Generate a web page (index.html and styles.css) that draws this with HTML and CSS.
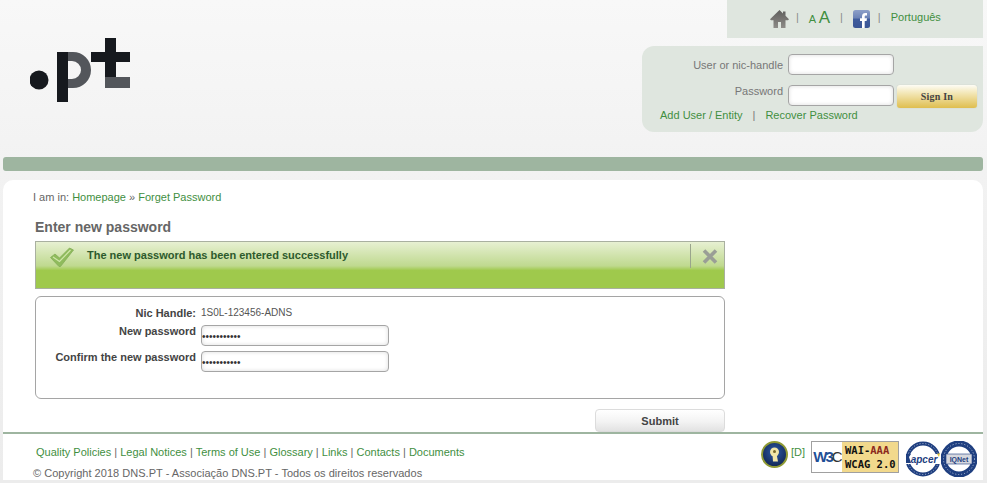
FILE: index.html
```html
<!DOCTYPE html>
<html lang="en">
<head>
<meta charset="utf-8">
<title>DNS.PT</title>
<link rel="stylesheet" href="styles.css">
</head>
<body>
<div class="page">
  <header class="header">
    <div class="logo">
      <svg width="101" height="65" viewBox="0 0 101 65" aria-label=".pt">
        <circle cx="9" cy="42" r="9.500" fill="#16191e"/>
        <path d="M38 14h5a18 18 0 0 1 0 36h-5v-9h4a9 9 0 0 0 0-18h-4z" fill="#53565b"/>
        <rect x="27" y="14" width="11" height="50" fill="#16191e"/>
        <rect x="75" y="0" width="11" height="39" fill="#16191e"/>
        <rect x="61" y="14" width="39" height="10" fill="#16191e"/>
        <rect x="75" y="39" width="25" height="11" fill="#53565b"/>
      </svg>
    </div>
    <div class="tools">
      <nav class="topbar">
        <svg class="home" width="19" height="18" viewBox="0 0 19 18"><defs><linearGradient id="homeFill" x1="0" y1="0" x2="0" y2="1"><stop offset="0" stop-color="#5f5e5c"/><stop offset="1" stop-color="#8e8c88"/></linearGradient></defs><path d="M9.500 0 0 9.200 1 10.200H3.500V18H8v-6h3v6h4.500V10.200H18L19 9.200 15.500 5.800V1.500H13V3.400z" fill="url(#homeFill)"/></svg>
        <span class="sep">|</span>
        <span class="font-size"><span class="small-a">A</span> <span class="big-a">A</span></span>
        <span class="sep">|</span>
        <svg class="fb" width="17" height="18" viewBox="0 0 17 18"><defs><linearGradient id="fbFill" x1="0" y1="0" x2="0" y2="1"><stop offset="0" stop-color="#8ea0c8"/><stop offset=".45" stop-color="#6b83b6"/><stop offset=".5" stop-color="#3f5c9c"/><stop offset="1" stop-color="#3a5595"/></linearGradient></defs><rect width="17" height="18" rx="2.500" fill="url(#fbFill)"/><path d="M9 18v-7H7V8.300h2V6.400C9 4.200 10.300 3 12.300 3H14v2.600h-1.100c-.9 0-1.200.5-1.200 1.100v1.600H14L13.600 11h-1.900v7z" fill="#fff"/></svg>
        <span class="sep">|</span>
        <a class="link lang" href="#">Português</a>
      </nav>
      <form class="login">
        <div class="login-row row-user">
          <label class="login-label">User or nic-handle</label>
          <input class="login-input" type="text">
        </div>
        <div class="login-row row-pass">
          <label class="login-label">Password</label>
          <input class="login-input" type="password">
          <button class="signin" type="button">Sign In</button>
        </div>
        <div class="login-links">
          <a class="link" href="#">Add User / Entity</a>
          <span class="login-sep">|</span>
          <a class="link" href="#">Recover Password</a>
        </div>
      </form>
    </div>
  </header>
  <div class="bar"></div>
  <main class="panel">
    <p class="crumbs">I am in: <a class="link" href="#">Homepage</a> » <a class="link" href="#">Forget Password</a></p>
    <section class="content">
      <h1 class="title">Enter new password</h1>
      <div class="notice">
        <svg class="check" width="24" height="20" viewBox="0 0 24 20"><path d="M0.500 10.500 5 7 9.500 11 19.500 1 23.500 3 10.500 19.500H9z" fill="#8fbb5c" stroke="#84ad58" stroke-width=".8"/><path d="M3 10 9.500 14.500 20.500 3" fill="none" stroke="#d0e6aa" stroke-width="1.200"/></svg>
        <span class="notice-text">The new password has been entered successfully</span>
        <span class="notice-close">
          <svg width="16" height="15" viewBox="0 0 16 15"><path d="M2 1.500 14 13.500M14 1.500 2 13.500" stroke="#9a9e96" stroke-width="3.600"/></svg>
        </span>
      </div>
      <form class="form-box">
        <div class="form-row row-nic">
          <span class="form-label">Nic Handle:</span>
          <span class="form-value">1S0L-123456-ADNS</span>
        </div>
        <div class="form-row">
          <label class="form-label">New password</label>
          <input class="form-input" type="password" value="12345678901">
        </div>
        <div class="form-row">
          <label class="form-label">Confirm the new password</label>
          <input class="form-input" type="password" value="12345678901">
        </div>
      </form>
      <div class="actions"><button class="submit" type="button">Submit</button></div>
    </section>
    <footer class="footer">
      <div class="footer-text">
        <p class="footer-links">
          <a class="link" href="#">Quality Policies</a> | <a class="link" href="#">Legal Notices</a> | <a class="link" href="#">Terms of Use</a> | <a class="link" href="#">Glossary</a> | <a class="link" href="#">Links</a> | <a class="link" href="#">Contacts</a> | <a class="link" href="#">Documents</a>
        </p>
        <p class="copyright">© Copyright 2018 DNS.PT - Associação DNS.PT - Todos os direitos reservados</p>
      </div>
      <div class="badges">
        <svg class="key" width="27" height="27" viewBox="0 0 27 27"><defs><radialGradient id="keyFill" cx=".5" cy=".4" r=".6"><stop offset="0" stop-color="#2d5aa8"/><stop offset="1" stop-color="#122652"/></radialGradient></defs><circle cx="13.500" cy="13.500" r="12.500" fill="url(#keyFill)" stroke="#8f9a34" stroke-width="2"/><circle cx="13.500" cy="11" r="4.500" fill="#f2e6a8"/><path d="M11.500 13h4l1.500 7.500h-5z" fill="#f2e6a8"/><circle cx="13.500" cy="10.500" r="1.500" fill="#7a6a2a"/></svg>
        <a class="link d-link" href="#">[D]</a>
        <span class="wai">
          <span class="w3c"><span class="w3">W3</span>C</span>
          <span class="wai-text"><span>WAI-<b>AAA</b></span><span>WCAG 2.0</span></span>
        </span>
        <svg class="seal" width="36" height="36" viewBox="0 0 36 36"><circle cx="18" cy="18" r="15.500" fill="#fff" stroke="#1f3f80" stroke-width="4"/><circle cx="18" cy="18" r="15.500" fill="none" stroke="#b8c4dc" stroke-width="1" stroke-dasharray="1 2"/><rect x="0" y="13" width="36" height="10" fill="#fff"/><text x="19" y="22" text-anchor="middle" class="seal-text">apcer</text><path d="M1 13h5l-2 3 2 6H1z" fill="#1f3f80"/><path d="M32 13l3-1-1 4z" fill="#e2c53c"/></svg>
        <svg class="seal" width="36" height="36" viewBox="0 0 36 36"><circle cx="18" cy="18" r="15.500" fill="#fff" stroke="#1f3f80" stroke-width="6"/><circle cx="18" cy="18" r="15.500" fill="none" stroke="#b8c4dc" stroke-width="1" stroke-dasharray="1 2"/><rect x="5" y="13" width="26" height="10" fill="#d6d8de" stroke="#1f3f80" stroke-width=".6"/><text x="18" y="21" text-anchor="middle" class="seal-text-b">IQNet</text></svg>
      </div>
    </footer>
  </main>
</div>
</body>
</html>
```
FILE: styles.css
```css
html, body {
  margin: 0;
  padding: 0;
  height: 483px;
  overflow: hidden;
}
body {
  background: linear-gradient(#f8f8f8 0, #f2f2f2 170px, #ececec 100%);
  font-family: "Liberation Sans", Arial, sans-serif;
  font-size: 11px;
  color: #666;
}
p, h1 { margin: 0; }
.link { color: #3f8f3f; text-decoration: none; }

.page { display: flex; flex-direction: column; padding: 0 4px 0 3px; }

.header { display: flex; justify-content: space-between; height: 157px; }
.logo { padding: 38px 0 0 27px; }
.logo svg { display: block; }
.tools { display: flex; flex-direction: column; align-items: flex-end; }

.topbar {
  box-sizing: border-box;
  width: 256px;
  height: 38px;
  background: #dfe6df;
  display: flex;
  align-items: center;
  padding: 0 0 4px 43px;
}
.home { margin: 4px 7px 0 0; }
.sep { color: #8a8a8a; font-size: 11px; }
.font-size { margin: 0 10px 0 10px; color: #3f8f3f; line-height: 1; white-space: nowrap; }
.small-a { font-size: 11px; }
.big-a { font-size: 17px; }
.fb { margin: 4px 8px 0 10px; }
.lang { margin-left: 10px; }

.login {
  box-sizing: border-box;
  width: 341px;
  height: 86px;
  margin-top: 8px;
  background: #dfe6df;
  border-radius: 12px 0 12px 12px;
  padding: 8px 6px 0 18px;
}
.login-row { display: flex; align-items: flex-start; }
.row-user { height: 31px; }
.row-pass { height: 26px; }
.login-label { width: 123px; text-align: right; color: #777; padding-top: 5px; font-size: 11px; }
.row-pass .login-label { padding-top: 0; }
.login-input {
  box-sizing: border-box;
  width: 106px;
  height: 21px;
  margin: 0 0 0 5px;
  padding: 0 4px;
  background: #fff;
  border: 1px solid #a5a5a5;
  border-radius: 4px;
  box-shadow: inset 0 0 4px #dcdcdc;
}
.signin {
  box-sizing: border-box;
  width: 80px;
  height: 23px;
  margin: 0 0 0 3px;
  padding: 0;
  border: 0;
  border-radius: 3px;
  background: linear-gradient(#fdfcf5 0, #f3e7b7 35%, #dfbe4f 100%);
  box-shadow: 0 0 1px #b9b9a0;
  font-family: "Liberation Serif", "Times New Roman", serif;
  font-size: 10px;
  font-weight: bold;
  letter-spacing: .2px;
  color: #444;
}
.login-links { display: flex; font-size: 11px; white-space: nowrap; margin-top: -2px; }
.login-sep { margin: 0 10px; color: #777; }

.bar { height: 14px; background: #9eb5a0; border-radius: 3px; }

.panel {
  margin-top: 9px;
  height: 300px;
  background: #fff;
  border-radius: 10px 10px 0 0;
  display: flex;
  flex-direction: column;
}
.crumbs { padding: 11px 0 0 30px; line-height: 13px; font-size: 11px; color: #666; }
.content { padding: 0 258px 0 32px; }
.title { margin-top: 15px; font-size: 14px; line-height: 16px; font-weight: bold; color: #666; }
.notice {
  box-sizing: border-box;
  height: 48px;
  margin-top: 6px;
  border: 1px solid #a9b0a0;
  background: linear-gradient(#e7f0d2 0, #bfd98f 52%, #9fc94c 62%, #9fc94c 100%);
  display: flex;
  align-items: flex-start;
  padding: 0 0 0 14px;
}
.check { margin-top: 5px; }
.notice-text { margin: 7px 0 0 13px; font-size: 11px; line-height: 12px; font-weight: bold; color: #2d5a2d; flex: 1; }
.notice-close {
  box-sizing: border-box;
  width: 34px;
  height: 24px;
  margin-top: 2px;
  padding-left: 4px;
  border-left: 1px solid #9aa58c;
  display: flex;
  align-items: center;
  justify-content: center;
}
.form-box {
  box-sizing: border-box;
  height: 103px;
  margin-top: 7px;
  border: 1px solid #a5a5a5;
  border-radius: 6px;
  padding: 9px 0 0;
}
.form-row { display: flex; align-items: flex-start; height: 26px; }
.row-nic { height: 19px; }
.form-label { width: 160px; text-align: right; font-weight: bold; color: #444; font-size: 11px; line-height: 13px; }
.row-nic .form-label { padding-top: 1px; }
.form-value { margin-left: 5px; font-size: 10px; line-height: 13px; color: #555; }
.form-input {
  box-sizing: border-box;
  width: 188px;
  height: 21px;
  margin: 0 0 0 5px;
  padding: 2px 0 0;
  border: 1px solid #a5a5a5;
  border-radius: 4px;
  box-shadow: inset 0 0 4px #dcdcdc;
  font-size: 10px;
  font-family: "Liberation Sans", Arial, sans-serif;
  color: #333;
  background: #fff;
}
.actions { display: flex; justify-content: flex-end; margin-top: 10px; }
.submit {
  box-sizing: border-box;
  width: 130px;
  height: 23px;
  padding: 0;
  border: 1px solid #dcdcdc;
  border-radius: 4px;
  background: linear-gradient(#fff 0, #f3f3f3 55%, #e2e2e2 100%);
  font-family: "Liberation Sans", Arial, sans-serif;
  font-size: 11px;
  font-weight: bold;
  color: #444;
}
.footer {
  border-top: 2px solid #9eb5a0;
  display: flex;
  justify-content: space-between;
  flex: 1;
  min-height: 0;
}
.footer-text { padding: 12px 0 0 30px; }
.footer-links { padding-left: 3px; line-height: 13px; font-size: 11px; color: #666; }
.copyright { margin-top: 8px; line-height: 13px; font-size: 11px; letter-spacing: .027px; color: #666; }
.badges { display: flex; align-items: flex-start; padding: 6px 6px 0 0; }
.key { margin-top: 1px; }
.d-link { margin: 6px 0 0 3px; font-size: 11px; }
.wai {
  box-sizing: border-box;
  width: 88px;
  height: 32px;
  margin: 1px 6px 0 6px;
  display: flex;
  border: 1px solid #a0a0a0;
  background: #fff;
}
.w3c {
  width: 30px;
  text-align: center;
  line-height: 30px;
  font-family: "Liberation Sans", Arial, sans-serif;
  font-size: 15px;
  letter-spacing: -2px;
  color: #333;
}
.w3 { color: #1f4f96; font-weight: bold; }
.wai-text {
  flex: 1;
  background: #f2d98c;
  display: flex;
  flex-direction: column;
  justify-content: center;
  padding-left: 3px;
  font-family: "DejaVu Sans Mono", monospace;
  font-size: 10.500px;
  line-height: 14px;
  font-weight: bold;
  color: #111;
  white-space: nowrap;
}
.wai-text b { color: #8c2a1e; }
.seal { margin-top: 1px; }
.seal-text { font: italic bold 10px "Liberation Sans", sans-serif; fill: #1f3f80; }
.seal-text-b { font: bold 7px "Liberation Sans", sans-serif; fill: #1f3f80; }
```
